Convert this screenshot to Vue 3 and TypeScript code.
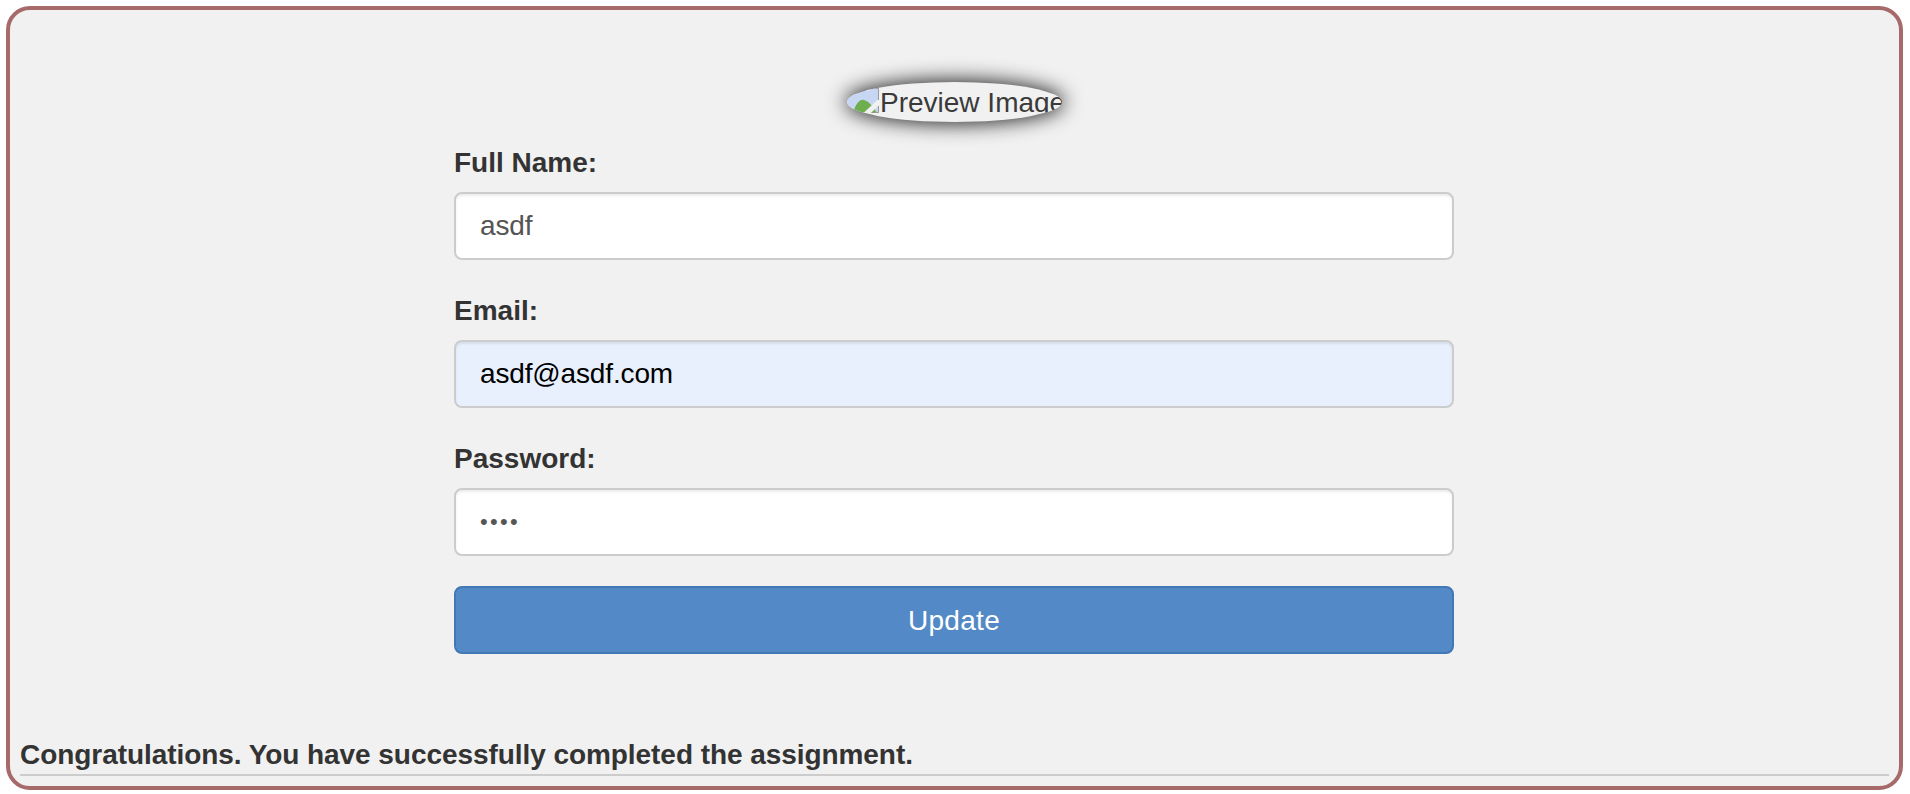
<script setup lang="ts">
import { ref } from 'vue'

const fullName = ref('asdf')
const email = ref('asdf@asdf.com')
const password = ref('asdf')
</script>

<template>
  <div class="page">
    <div class="profile-box">
      <div class="preview">
        <span class="preview-image">
          <span class="preview-clip">
            <svg class="broken-icon" viewBox="0 0 32 25" aria-hidden="true">
              <rect x="0" y="0" width="32" height="25" fill="#c6d6f3" />
              <path d="M10 3 Q13 0 17 1 Q21 0 22 3 Z" fill="#f4f7fd" />
              <path d="M6 25 C9 15 13 11 17 12 C22 13 27 20 30 25 Z" fill="#6fae4f" />
              <path d="M33 13 L18 27" stroke="#f1f1f1" stroke-width="5" fill="none" />
              <path d="M14 .5 H31.5 V12 M31.5 18 V24.5 H26" stroke="#9a9a9a" stroke-width="1" fill="none" />
            </svg>
            <span>Preview Image</span>
          </span>
        </span>
      </div>

      <form class="profile-form" @submit.prevent>
        <div class="field">
          <label for="fullName">Full Name:</label>
          <input id="fullName" v-model="fullName" type="text" />
        </div>
        <div class="field">
          <label for="email">Email:</label>
          <input id="email" v-model="email" class="autofilled" type="text" />
        </div>
        <div class="field">
          <label for="password">Password:</label>
          <input id="password" v-model="password" type="password" />
        </div>
        <button type="submit" class="update-btn">Update</button>
      </form>

      <div class="footer-note">
        <strong>Congratulations. You have successfully completed the assignment.</strong>
        <hr />
      </div>
    </div>
  </div>
</template>

<style>
html,
body {
  margin: 0;
  background: #ffffff;
}
</style>

<style scoped>
.page {
  height: 794px;
  box-sizing: border-box;
  padding: 6px 7px 4px 6px;
  font-family: "Liberation Sans", Arial, sans-serif;
  color: #333333;
}

.profile-box {
  height: 100%;
  box-sizing: border-box;
  display: flex;
  flex-direction: column;
  border: 4px solid #a66a6a;
  border-radius: 24px;
  background: #f1f1f1;
  padding: 72px 10px 10px;
}

.preview {
  display: flex;
  justify-content: center;
}

.preview-image {
  display: block;
  width: 215px;
  height: 40px;
  overflow: hidden;
  border-radius: 50%;
  box-shadow: 0 0 20px 2px rgba(0, 0, 0, 0.85);
}

/* the alt text is cut off under the baseline in the reference */
.preview-clip {
  display: flex;
  align-items: flex-start;
  height: 32px;
  overflow: hidden;
  font-size: 28px;
  line-height: 42px;
  white-space: nowrap;
  color: #3a3a3a;
}

.broken-icon {
  flex: none;
  width: 32px;
  height: 25px;
  margin-top: 6px;
  margin-right: 1px;
}

.profile-form {
  width: 1000px;
  margin: 20px 0 0 434px;
}

.field {
  margin-bottom: 30px;
}

label {
  display: block;
  margin-bottom: 10px;
  font-size: 28px;
  font-weight: 700;
  line-height: 41px;
  height: 40px;
}

input {
  display: block;
  width: 100%;
  height: 68px;
  box-sizing: border-box;
  padding: 12px 24px;
  border: 2px solid #cccccc;
  border-radius: 8px;
  background: #ffffff;
  box-shadow: inset 0 2px 2px rgba(0, 0, 0, 0.075);
  font-family: inherit;
  font-size: 28px;
  letter-spacing: -0.15px;
  color: #555555;
  outline: none;
}

input.autofilled {
  background: #e8f0fe;
  color: #000000;
}

input[type="password"] {
  font-size: 22px;
  letter-spacing: 2.3px;
}

.update-btn {
  display: block;
  width: 100%;
  height: 68px;
  padding: 1px 0 0;
  border: 2px solid #4278b4;
  border-radius: 8px;
  background: #5389c6;
  font-family: inherit;
  font-size: 28px;
  letter-spacing: 0.3px;
  color: #ffffff;
}

.footer-note {
  margin-top: auto;
}

.footer-note strong {
  display: block;
  font-size: 28px;
  line-height: 36px;
  letter-spacing: -0.06px;
}

hr {
  height: 2px;
  margin: 1px 0 0;
  border: 0;
  background: #cccccc;
}
</style>
